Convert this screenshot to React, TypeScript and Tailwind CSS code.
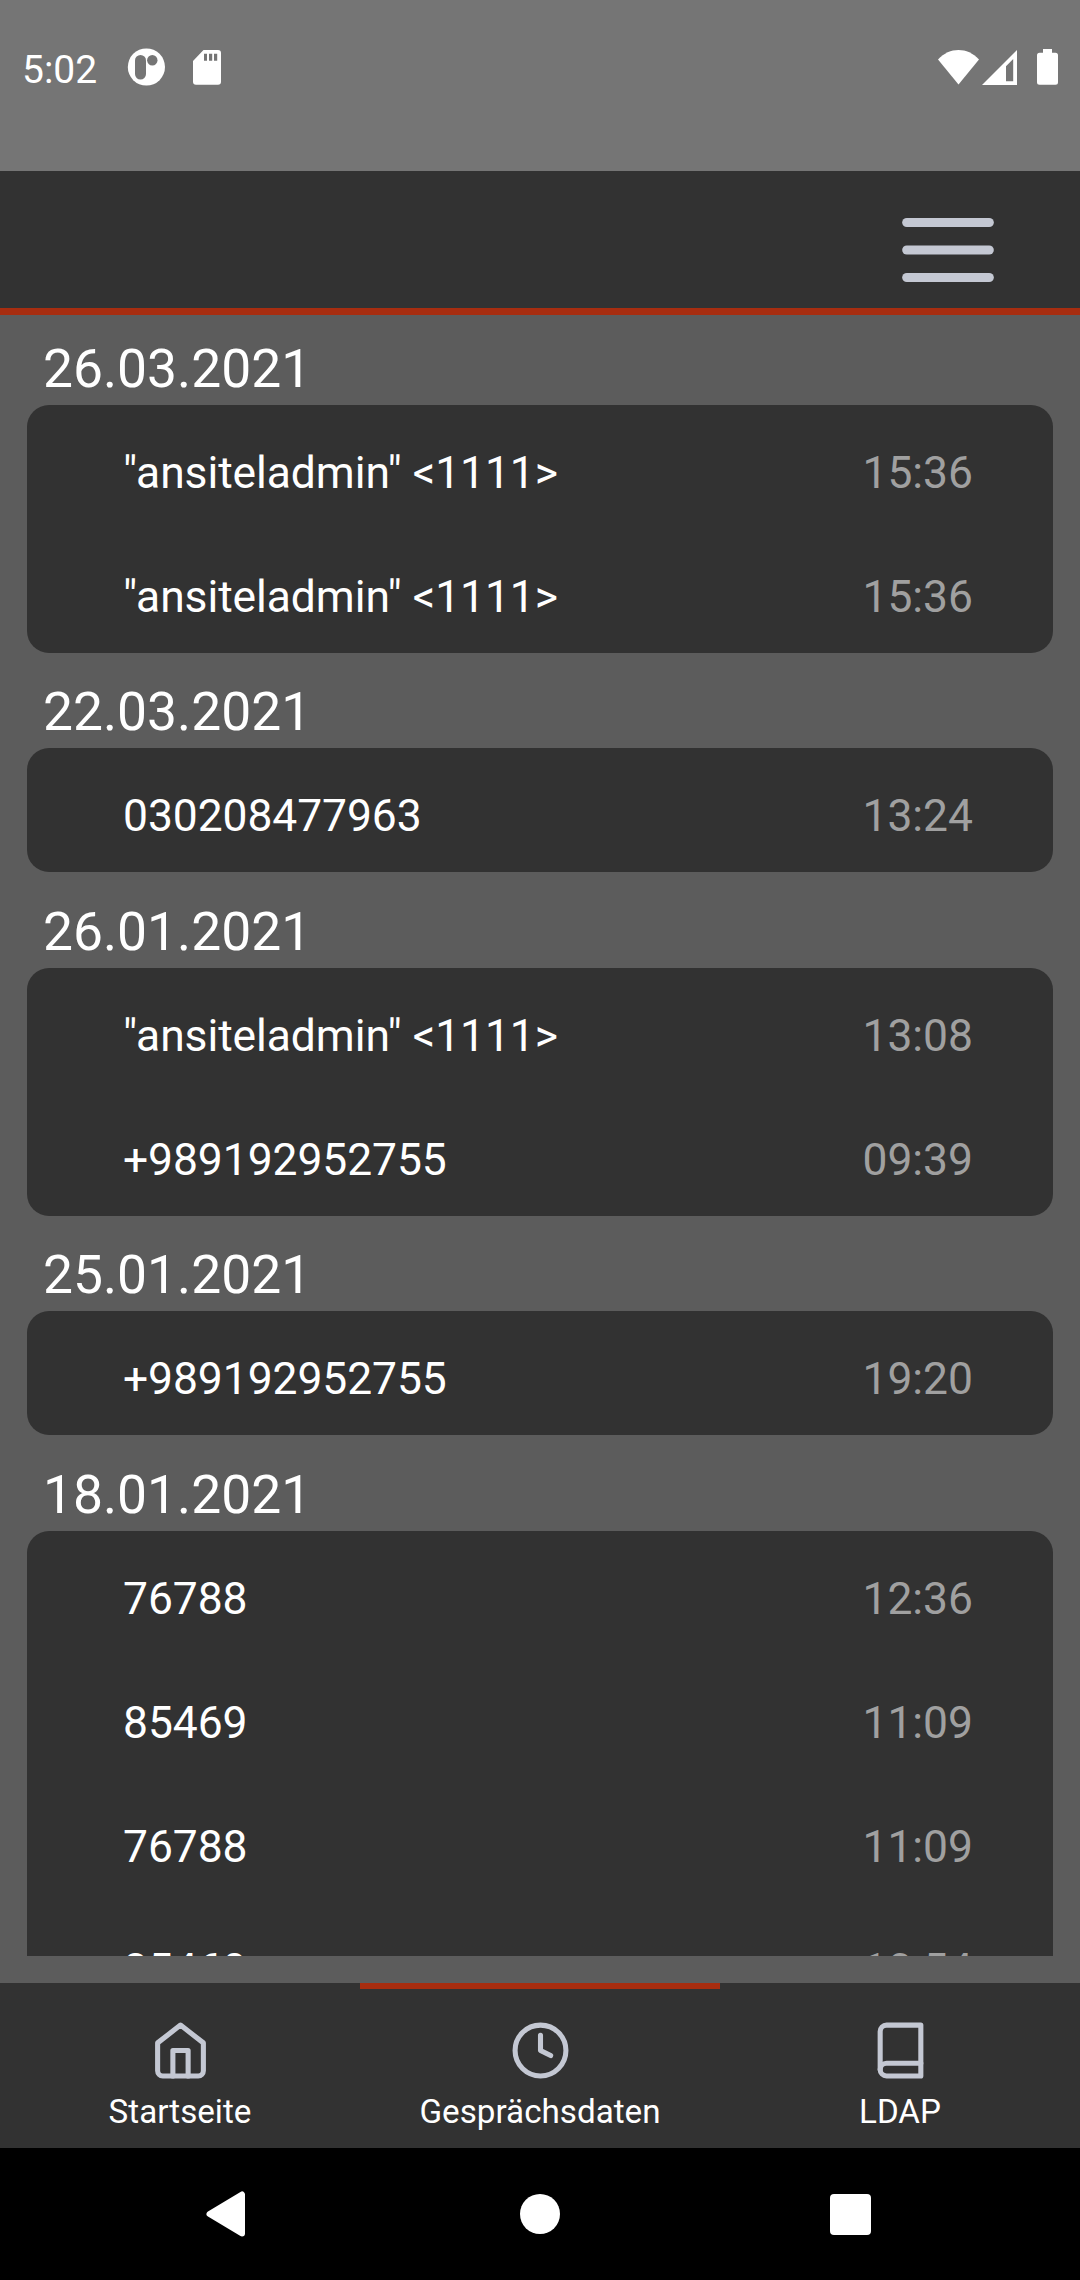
import React from 'react';
import { FiBook, FiClock, FiHome, FiMenu } from 'react-icons/fi';

interface Call {
  name: string;
  time: string;
}

interface CallGroup {
  date: string;
  calls: Call[];
}

const groups: CallGroup[] = [
  {
    date: '26.03.2021',
    calls: [
      { name: '"ansiteladmin" <1111>', time: '15:36' },
      { name: '"ansiteladmin" <1111>', time: '15:36' },
    ],
  },
  { date: '22.03.2021', calls: [{ name: '030208477963', time: '13:24' }] },
  {
    date: '26.01.2021',
    calls: [
      { name: '"ansiteladmin" <1111>', time: '13:08' },
      { name: '+989192952755', time: '09:39' },
    ],
  },
  { date: '25.01.2021', calls: [{ name: '+989192952755', time: '19:20' }] },
  {
    date: '18.01.2021',
    calls: [
      { name: '76788', time: '12:36' },
      { name: '85469', time: '11:09' },
      { name: '76788', time: '11:09' },
      { name: '85469', time: '10:54' },
    ],
  },
];

const tabs = [
  { label: 'Startseite', icon: FiHome, active: false },
  { label: 'Gesprächsdaten', icon: FiClock, active: true },
  { label: 'LDAP', icon: FiBook, active: false },
];

function StatusBar() {
  return (
    <div className="h-[171px] shrink-0 bg-[#757575] flex justify-between items-start pl-[22px] pr-[22px] pt-[44px]">
      <div className="flex items-center h-[50px]">
        <span className="w-[105px] text-[39px] leading-[50px] pt-[2px] text-white">5:02</span>
        <svg className="w-[38px] h-[38px] -mt-1" viewBox="0 0 38 38">
          <circle cx="19.4" cy="19" r="18.6" fill="#fff" />
          <rect x="8" y="7" width="11" height="24.5" rx="5.5" fill="#757575" />
          <circle cx="25.3" cy="12.3" r="5.2" fill="#757575" />
        </svg>
        <svg className="w-[28px] h-[35px] ml-[28px] -mt-[3px]" viewBox="0 0 28 35">
          <path d="M10.5 0H25a3 3 0 0 1 3 3v28.7a3 3 0 0 1-3 3H3a3 3 0 0 1-3-3V11z" fill="#fff" />
          <path d="M11 3.7h3v7h-3zM16 3.7h3.2v7H16zM21 3.7h3.2v7H21z" fill="#757575" />
        </svg>
      </div>

      <div className="flex items-start pt-[5px]">
        <svg className="w-[41px] h-[36px] mt-px" viewBox="0 0 41 36">
          <path d="M0 9.4C6 3.2 13 0 20.5 0S35 3.2 41 9.4L20.5 34.5z" fill="#fff" />
        </svg>
        <svg className="w-[35px] h-[35px] ml-[3px] mt-px" viewBox="0 0 35 35">
          <path d="M35 0v35H0zM31.2 9L24 16.2V31.2h7.2z" fill="#fff" fillRule="evenodd" />
        </svg>
        <svg className="w-[21px] h-[36px] ml-[20px]" viewBox="0 0 21 36">
          <path d="M6 0h9v3.7h3.5a2.5 2.5 0 0 1 2.5 2.5v27a2.5 2.5 0 0 1-2.5 2.5h-16A2.5 2.5 0 0 1 0 33.2v-27a2.5 2.5 0 0 1 2.5-2.5H6z" fill="#fff" />
        </svg>
      </div>
    </div>
  );
}

function Header() {
  return (
    <header className="h-[144px] shrink-0 bg-[#323232] border-b-[7px] border-[#a72d10] flex justify-end items-start pt-[23.5px] pr-[77px]">
      <FiMenu className="w-[110px] h-[110px] text-[#c4c8d3]" />
    </header>
  );
}

function CallSection({ group }: { group: CallGroup }) {
  return (
    <section>
      <h2 className="h-[73px] pl-[16px] text-[53.4px] leading-[74px] text-white">{group.date}</h2>
      <div className="bg-[#323232] rounded-[22px]">
        {group.calls.map((call, i) => (
          <div key={i} className="h-[123.8px] pt-[12.8px] pl-[96px] pr-[80px] flex justify-between items-center text-[44.4px]">
            <span className="text-white tracking-[-0.07px]">{call.name}</span>
            <span className="text-[#a0a0a0]">{call.time}</span>
          </div>
        ))}
      </div>
    </section>
  );
}

function TabBar() {
  return (
    <nav className="h-[165px] shrink-0 bg-[#323232] grid grid-cols-3">
      {tabs.map(({ label, icon: Icon, active }) => (
        <div
          key={label}
          className={`flex flex-col items-center pt-[30.5px] border-t-[6px] ${
            active ? 'border-[#a72d10]' : 'border-transparent'
          }`}
        >
          <Icon className="w-[61px] h-[61px] text-[#c4c8d3]" />
          <span className="text-[33.2px] leading-[40px] mt-[11.5px] text-white">{label}</span>
        </div>
      ))}
    </nav>
  );
}

// Android system navigation
function NavigationBar() {
  return (
    <div className="h-[132px] shrink-0 bg-black flex items-center pl-[206px]">
      <svg className="w-[39px] h-[46px]" viewBox="0 0 39 46">
        <path d="M3.5 23L36 3.5v39z" fill="#fff" stroke="#fff" strokeWidth="6" strokeLinejoin="round" />
      </svg>
      <div className="w-[40px] h-[40px] ml-[275px] rounded-full bg-white" />
      <div className="w-[41px] h-[41px] ml-[270px] rounded-[4px] bg-white" />
    </div>
  );
}

export default function App() {
  return (
    <div className="w-[1080px] h-[2280px] flex flex-col overflow-hidden bg-[#5c5c5c] font-['Roboto',sans-serif]">
      <StatusBar />
      <Header />
      <main className="flex-1 min-h-0 px-[27px] pb-[27px]">
        <div className="h-full overflow-hidden pt-[17px] flex flex-col gap-[22.8px]">
          {groups.map((group) => (
            <CallSection key={group.date} group={group} />
          ))}
        </div>
      </main>
      <TabBar />
      <NavigationBar />
    </div>
  );
}
